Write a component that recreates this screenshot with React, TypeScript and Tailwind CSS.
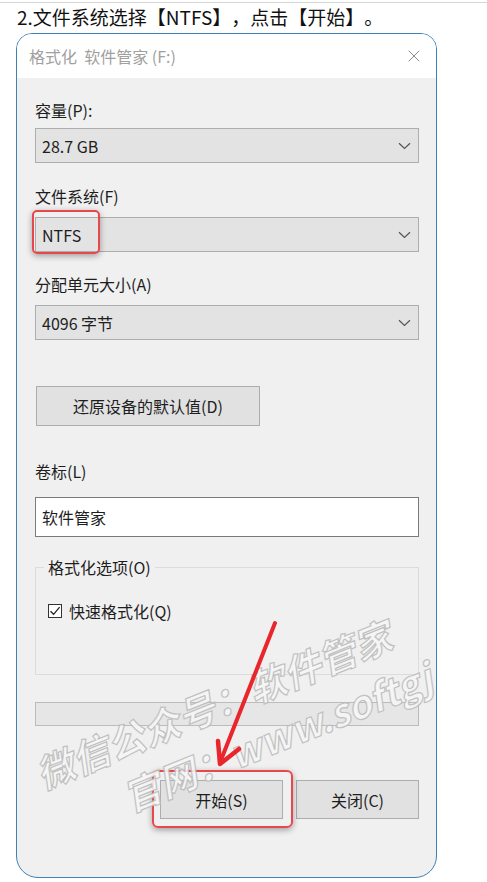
import { X } from "lucide-react";

const cjk = "font-['Noto_Sans_CJK_SC','Noto_Sans',sans-serif]";

function Chevron() {
  return (
    <svg width="13" height="8" viewBox="0 0 13 8" className="shrink-0">
      <path d="M1 1.2 L6.5 6.5 L12 1.2" fill="none" stroke="#555" strokeWidth="1.2" />
    </svg>
  );
}

function Select({ value }: { value: string }) {
  return (
    <div className="flex h-[35px] w-[384px] items-center justify-between border border-[#adadad] bg-[#e3e3e3] pl-[6px] pr-[7px] text-[16px] text-[#1e1e1e]">
      <span>{value}</span>
      <Chevron />
    </div>
  );
}

function Label({ children, className = "" }: { children: React.ReactNode; className?: string }) {
  return <p className={`h-[20px] text-[16px] leading-[20px] text-[#1e1e1e] ${className}`}>{children}</p>;
}

function Watermark() {
  return (
    <div aria-hidden className="pointer-events-none absolute inset-0 overflow-hidden">
      <p className="absolute left-[20px] top-[717px] origin-left -rotate-[22deg] whitespace-nowrap text-[38px] font-bold italic leading-[48px] text-[#f6f6f6] opacity-90 [-webkit-text-stroke:1.2px_#bdbdbd]">
        微信公众号：软件管家
      </p>
      <p className="absolute left-[107px] top-[740px] origin-left -rotate-[22deg] whitespace-nowrap text-[38px] font-bold italic leading-[48px] text-[#f6f6f6] opacity-90 [-webkit-text-stroke:1.2px_#bdbdbd]">
        官网：www.softgj.com
      </p>
    </div>
  );
}

function FormatDialog() {
  return (
    <div className="relative ml-[16px] mt-[2px] h-[845px] w-[421px] overflow-hidden rounded-t-[16px] rounded-b-[22px] border border-[#3a82b8] bg-[#f0f0f0]">
      {/* title bar */}
      <div className="flex h-[44px] items-center justify-between bg-white pl-[12px] pr-[12px]">
        <span className="text-[16px] text-[#a0a0a0]">格式化&nbsp; 软件管家 (F:)</span>
        <X size={20} strokeWidth={1.2} className="text-[#8a8a8a]" />
      </div>

      <div className="pl-[18px] pr-[17px] pt-[22px]">
        <Label>容量(P):</Label>
        <div className="mt-[8px]">
          <Select value="28.7 GB" />
        </div>

        <Label className="mt-[23px]">文件系统(F)</Label>
        <div className="relative mt-[11px]">
          <Select value="NTFS" />
          <div className="absolute -left-[3px] -top-[7px] h-[44px] w-[68px] rounded-[5px] border-[2.5px] border-[#e8474d] shadow-[0_2px_6px_rgba(0,0,0,0.35)]" />
        </div>

        <Label className="mt-[22px]">分配单元大小(A)</Label>
        <div className="mt-[11px]">
          <Select value="4096 字节" />
        </div>

        <button className="ml-px mt-[46px] flex h-[40px] w-[224px] items-center justify-center border border-[#adadad] bg-[#e1e1e1] text-[16px] text-[#1e1e1e]">
          还原设备的默认值(D)
        </button>

        <Label className="mt-[35px]">卷标(L)</Label>
        <div className="mt-[16px] flex h-[40px] w-[384px] items-center border border-[#7a7a7a] bg-white pl-[6px] text-[16px] text-[#1e1e1e]">
          软件管家
        </div>

        <div className="relative mt-[30px] h-[108px] w-[384px] border border-[#dcdcdc]">
          <span className="absolute -top-[11px] left-[8px] bg-[#f0f0f0] px-[4px] text-[16px] leading-[20px] text-[#1e1e1e]">
            格式化选项(O)
          </span>
          <div className="ml-[12px] mt-[33px] flex items-center gap-[7px]">
            <span className="flex h-[14px] w-[14px] items-center justify-center border border-[#333] bg-white">
              <svg width="12" height="12" viewBox="0 0 12 12">
                <path d="M1.5 6.2 L4.6 9.3 L10.6 2.2" fill="none" stroke="#222" strokeWidth="1.3" />
              </svg>
            </span>
            <span className="text-[16px] leading-[20px] text-[#1e1e1e]">快速格式化(Q)</span>
          </div>
        </div>

        <div className="mt-[27px] h-[24px] w-[384px] border border-[#bcbcbc] bg-[#e6e6e6]" />

        <div className="mt-[54px] flex w-[384px] justify-end gap-[13px]">
          <div className="relative">
            <button className="flex h-[39px] w-[123px] items-center justify-center border border-[#adadad] bg-[#e1e1e1] text-[16px] text-[#1e1e1e]">
              开始(S)
            </button>
            <div className="absolute -left-[8px] -top-[10px] h-[58px] w-[141px] rounded-[6px] border-[2.5px] border-[#e8474d] shadow-[0_2px_6px_rgba(0,0,0,0.35)]" />
          </div>
          <button className="flex h-[39px] w-[123px] items-center justify-center border border-[#adadad] bg-[#e1e1e1] text-[16px] text-[#1e1e1e]">
            关闭(C)
          </button>
        </div>
      </div>

      <Watermark />
    </div>
  );
}

export default function App() {
  return (
    <div className={`relative h-[882px] w-[487px] overflow-hidden bg-white ${cjk}`}>
      <div className="mt-[2px] h-px bg-[#d4d4d4]" />
      <p className="h-[28px] pl-[17px] text-[19px] leading-[28px] text-[#111] [text-spacing-trim:space-all]">
        2.文件系统选择【NTFS】，点击【开始】。
      </p>
      <FormatDialog />

      <svg
        aria-hidden
        className="pointer-events-none absolute left-0 top-0"
        width="487"
        height="882"
        viewBox="0 0 487 882"
      >
        <line x1="275" y1="623" x2="221" y2="760" stroke="#e8262b" strokeWidth="4" strokeLinecap="round" />
        <polyline
          points="218,741 220,764 239,749"
          fill="none"
          stroke="#e8262b"
          strokeWidth="4.5"
          strokeLinecap="round"
          strokeLinejoin="round"
        />
      </svg>
    </div>
  );
}
